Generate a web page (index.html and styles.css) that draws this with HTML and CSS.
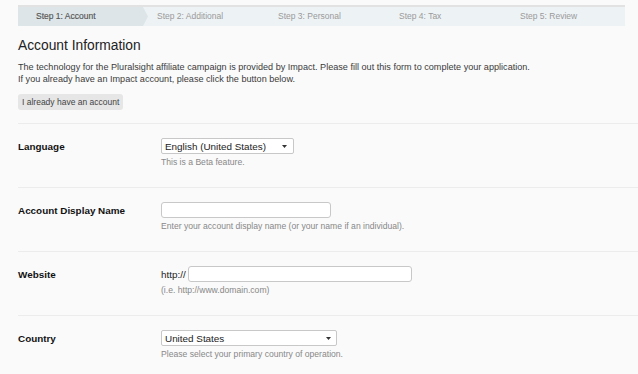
FILE: index.html
```html
<!DOCTYPE html>
<html>
<head>
<meta charset="utf-8">
<link rel="stylesheet" href="styles.css">
</head>
<body>
<div class="page">
  <div class="steps">
    <div class="step active">Step 1: Account</div>
    <div class="step second">Step 2: Additional</div>
    <div class="step">Step 3: Personal</div>
    <div class="step">Step 4: Tax</div>
    <div class="step">Step 5: Review</div>
  </div>
  <h1 class="title">Account Information</h1>
  <p class="intro">The technology for the Pluralsight affiliate campaign is provided by Impact. Please fill out this form to complete your application.<br>If you already have an Impact account, please click the button below.</p>
  <button class="btn">I already have an account</button>
  <div class="rows">
    <div class="row">
      <div class="label">Language</div>
      <div class="field">
        <div class="select lang"><span>English (United States)</span><svg class="caret" width="5" height="3" viewBox="0 0 5 3"><path d="M0 0H5L2.5 3Z" fill="#333"/></svg></div>
        <div class="help">This is a Beta feature.</div>
      </div>
    </div>
    <div class="row">
      <div class="label">Account Display Name</div>
      <div class="field">
        <div class="input name"></div>
        <div class="help">Enter your account display name (or your name if an individual).</div>
      </div>
    </div>
    <div class="row">
      <div class="label">Website</div>
      <div class="field">
        <div class="inline"><span class="prefix">http://</span><div class="input site"></div></div>
        <div class="help">(i.e. http://www.domain.com)</div>
      </div>
    </div>
    <div class="row">
      <div class="label">Country</div>
      <div class="field">
        <div class="select country"><span>United States</span><svg class="caret" width="5" height="3" viewBox="0 0 5 3"><path d="M0 0H5L2.5 3Z" fill="#333"/></svg></div>
        <div class="help">Please select your primary country of operation.</div>
      </div>
    </div>
  </div>
</div>
</body>
</html>
```

FILE: styles.css
```css
* { box-sizing: border-box; }
html, body { margin: 0; padding: 0; background: #fafafa; }
body { font-family: "Liberation Sans", Arial, sans-serif; color: #333; }
.page { padding: 5px 0 0 18px; }

.steps {
  width: 607px;
  display: grid;
  grid-template-columns: 130px 112px 121px 121px 123px;
  border-top: 2px solid #e2e2e2;
  background: #edf2f5;
  height: 21px;
}
.step {
  font-size: 8.5px;
  line-height: 19px;
  color: #9a9a9a;
  padding-left: 18px;
  white-space: nowrap;
}
.step.active {
  background: #dde5e9;
  color: #555;
  clip-path: polygon(0 0, 125px 0, 130px 50%, 125px 100%, 0 100%);
  -webkit-text-stroke: 0.15px #555;
}
.step.second { padding-left: 9px; }

.title {
  margin: 12px 0 0;
  font-size: 13.8px;
  line-height: 16px;
  font-weight: normal;
  color: #222;
}
.intro {
  margin: 7px 0 0;
  font-size: 9.1px;
  line-height: 12px;
  color: #3a3a3a;
}
.btn {
  display: block;
  margin: 9px 0 0;
  height: 16px;
  padding: 0 4px;
  border: 0;
  border-radius: 3px;
  background: #e6e6e6;
  font-family: "Liberation Sans", Arial, sans-serif;
  font-size: 8.5px;
  color: #444;
}
.rows { margin-top: 13px; }
.row {
  display: grid;
  grid-template-columns: 143px 1fr;
  border-top: 1px solid #ececec;
  padding: 14px 0 19px;
  height: 64px;
}
.label {
  font-size: 9.9px;
  font-weight: bold;
  color: #111;
  line-height: 17px;
}
.select, .input {
  height: 16px;
  background: #fff;
  border: 1px solid #c8c8c8;
  border-radius: 2px;
}
.select {
  display: flex;
  align-items: center;
  justify-content: space-between;
  padding: 0 6px 0 3px;
  font-size: 9.9px;
  color: #222;
}
.select.lang { width: 133px; }
.select.country { width: 176px; padding-right: 5px; }
.caret { display: block; }
.input { border-radius: 3px; }
.input.name { width: 170px; }
.inline { display: flex; align-items: center; }
.prefix { font-size: 9.9px; color: #222; margin-right: 2px; }
.input.site { width: 224px; }
.help {
  margin-top: 3px;
  font-size: 8.6px;
  line-height: 10px;
  color: #888;
}
```
